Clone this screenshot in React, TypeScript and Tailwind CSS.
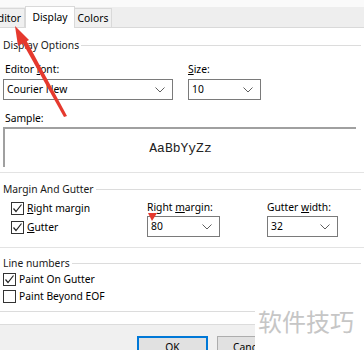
import React from "react";

function Chevron() {
  return (
    <svg width="10" height="6" viewBox="0 0 10 6" className="shrink-0">
      <polyline points="0.5,0.5 5,5 9.5,0.5" fill="none" stroke="#5f5f5f" strokeWidth="1" />
    </svg>
  );
}

function Combo({ value, width }: { value: string; width: string }) {
  return (
    <div className={`flex h-[21px] items-center justify-between border border-[#7a7a7a] bg-white pl-[3px] pr-[7px] ${width}`}>
      <span>{value}</span>
      <Chevron />
    </div>
  );
}

function Check({ checked, label }: { checked: boolean; label: React.ReactNode }) {
  return (
    <div className="flex h-[15px] items-center gap-[3px]">
      <span className="flex size-[13px] items-center justify-center border border-[#333] bg-white">
        {checked && (
          <svg width="11" height="11" viewBox="0 0 11 11">
            <polyline points="1.5,5.5 4,8.5 9.5,1.5" fill="none" stroke="#222" strokeWidth="1.2" />
          </svg>
        )}
      </span>
      <span>{label}</span>
    </div>
  );
}

function GroupTitle({ title }: { title: string }) {
  return (
    <div className="flex h-4 items-center gap-[2px] text-[#1a1a1a]">
      <span>{title}</span>
      <div className="h-px flex-1 bg-[#dcdcdc]" />
    </div>
  );
}

export default function App() {
  return (
    <div className="relative flex h-[350px] w-[364px] flex-col overflow-hidden bg-white font-['Noto_Sans',sans-serif] text-[10.3px] leading-none text-black *:shrink-0">
      <div className="h-[7px] bg-[#fafafa]" />

      {/* tab strip */}
      <div className="flex h-[21px] items-end border-b border-[#d9d9d9] bg-[#eeeeee]">
        <div className="flex h-[19px] w-[25px] items-center justify-end border-r border-t border-[#d9d9d9] bg-[#f0f0f0] pr-[3px]">
          ditor
        </div>
        <div className="relative -mb-px flex h-[22px] w-[50px] items-center justify-center border-x border-t border-[#d9d9d9] bg-white">
          Display
        </div>
        <div className="flex h-[19px] w-[37px] items-center justify-center border-r border-t border-[#d9d9d9] bg-[#f0f0f0]">
          Colors
        </div>
      </div>

      <div className="flex flex-col px-[3px]">
        <div className="mt-[9px]">
          <GroupTitle title="Display Options" />
        </div>

        <div className="mt-[9px] flex gap-[15px]">
          <div className="flex flex-col">
            <div className="flex h-[14px] items-center pl-[2px]">
              Editor&nbsp;<span className="underline">f</span>ont:
            </div>
            <div className="mt-[3px]">
              <Combo value="Courier New" width="w-[170px]" />
            </div>
          </div>
          <div className="flex flex-col">
            <div className="flex h-[14px] items-center">
              <span className="underline">S</span>ize:
            </div>
            <div className="mt-[3px]">
              <Combo value="10" width="w-[73px]" />
            </div>
          </div>
        </div>

        <div className="mt-[11px] flex h-[14px] items-center pl-[2px]">Sample:</div>
        <div className="mt-[2px] flex h-[40px] w-[353px] items-center justify-center border-l-2 border-t-2 border-[#a0a0a0] font-['Liberation_Mono',monospace] text-[13px] text-[#222]">
          AaBbYyZz
        </div>
      </div>

      <div className="mt-[5px] h-px bg-[#e3e3e3]" />

      <div className="flex flex-col px-[3px]">
        <div className="mt-[8px]">
          <GroupTitle title="Margin And Gutter" />
        </div>
        <div className="flex h-[40px]">
          <div className="flex w-[144px] flex-col gap-[4px] pl-[8px] pt-[4px]">
            <Check checked label={<><span className="underline">R</span>ight margin</>} />
            <Check checked label={<><span className="underline">G</span>utter</>} />
          </div>
          <div className="flex w-[120px] flex-col pt-[3px]">
            <div className="flex h-[14px] items-center">
              Right&nbsp;<span className="underline">m</span>argin:
            </div>
            <div className="mt-[2px]">
              <Combo value="80" width="w-[73px]" />
            </div>
          </div>
          <div className="flex flex-col pt-[3px]">
            <div className="flex h-[14px] items-center">
              Gutter&nbsp;<span className="underline">w</span>idth:
            </div>
            <div className="mt-[2px]">
              <Combo value="32" width="w-[71px]" />
            </div>
          </div>
        </div>
      </div>

      <div className="mt-[10px] h-px bg-[#e3e3e3]" />

      <div className="flex flex-col px-[3px]">
        <div className="mt-[7px]">
          <GroupTitle title="Line numbers" />
        </div>
        <div className="mt-[1px] flex flex-col gap-[2px]">
          <Check checked label="Paint On Gutter" />
          <Check checked={false} label="Paint Beyond EOF" />
        </div>
      </div>

      <div className="mt-[7px] h-px bg-[#dcdcdc]" />

      <div className="mt-[12px] flex h-[40px] gap-[9px] border-t border-[#dcdcdc] bg-[#f0f0f0] pl-[137px] pt-[11px]">
        <div className="flex h-[23px] w-[71px] items-center justify-center border-2 border-[#0078d7] bg-[#e1e1e1]">
          OK
        </div>
        <div className="flex h-[23px] w-[71px] items-center justify-start border border-[#adadad] bg-[#e1e1e1] pl-[15px]">
          Cancel
        </div>
      </div>

      {/* watermark */}
      <div className="absolute left-[255px] top-[304px] flex h-[46px] w-[109px] items-start bg-white pl-[3px] pt-[3px] font-['Noto_Sans_CJK_SC',sans-serif] text-[24px] leading-[28px] text-[#c6c6c6]">
        软件技巧
      </div>

      {/* red annotation arrow */}
      <svg className="pointer-events-none absolute left-0 top-0" width="364" height="350" viewBox="0 0 364 350">
        <polygon points="67,116 64,117 21,40 25,38" fill="#e5392e" />
        <polygon points="15,26 29,40 18,46" fill="#e5392e" />
        <polygon points="148,213 157,213 152,221" fill="#e5392e" />
      </svg>
    </div>
  );
}
